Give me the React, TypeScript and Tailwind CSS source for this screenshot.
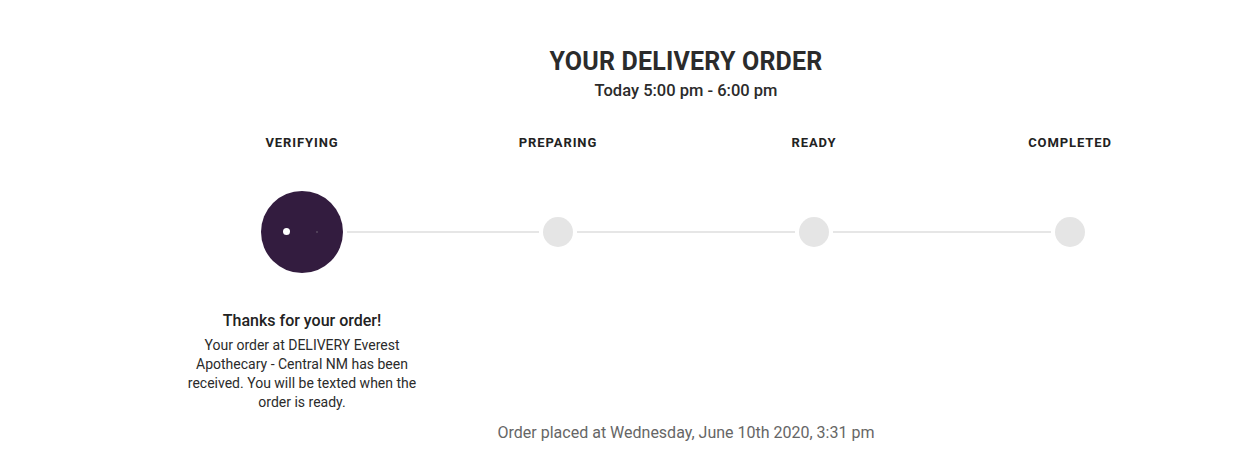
import React from "react";

const steps = ["VERIFYING", "PREPARING", "READY", "COMPLETED"];

export default function App() {
  return (
    <div
      className="w-[1239px] h-[461px] bg-white text-[#2b2b2b] overflow-hidden"
      style={{ fontFamily: "Roboto, 'Liberation Sans', sans-serif" }}
    >
      <div className="ml-[174px] w-[1024px] flex flex-col items-center">
        <h1 className="mt-[48px] text-[25px] leading-[28px] font-bold tracking-[0.2px] text-[#2b2b2b]">
          YOUR DELIVERY ORDER
        </h1>
        <div className="mt-[5px] text-[16.5px] leading-[20px] font-medium text-[#2b2b2b]">
          Today 5:00 pm - 6:00 pm
        </div>

        <div className="mt-[34px] w-full grid grid-cols-4">
          {steps.map((s, i) => (
            <div key={s} className="flex flex-col items-center">
              <div className="text-[13px] leading-[16px] font-bold tracking-[0.9px] text-[#222]">
                {s}
              </div>
              <div className="mt-[40px] w-full h-[82px] flex items-center">
                <div className="flex-1 pr-1">
                  {i > 0 && <div className="h-[2px] bg-[#e6e6e6]" />}
                </div>
                {i === 0 ? (
                  <div className="relative w-[82px] h-[82px] rounded-full bg-[#331c3f]">
                    <span className="absolute left-[22px] top-[37px] w-[7px] h-[7px] rounded-full bg-white" />
                    <span className="absolute left-[55px] top-[40px] w-[2px] h-[2px] rounded-full bg-[#5a4a62]" />
                  </div>
                ) : (
                  <div className="w-[30px] h-[30px] rounded-full bg-[#e5e5e5]" />
                )}
                <div className="flex-1 pl-1">
                  {i < 3 && <div className="h-[2px] bg-[#e6e6e6]" />}
                </div>
              </div>
              {i === 0 && (
                <div className="mt-[38px] w-[244px] text-center">
                  <div className="text-[16px] leading-[20px] font-medium text-[#222]">
                    Thanks for your order!
                  </div>
                  <p className="mt-[5px] text-[14px] leading-[19px] text-[#2b2b2b]">
                    Your order at DELIVERY Everest Apothecary - Central NM has been received. You
                    will be texted when the order is ready.
                  </p>
                </div>
              )}
            </div>
          ))}
        </div>

        <div className="mt-[11px] text-[16px] leading-[20px] text-[#666]">
          Order placed at Wednesday, June 10th 2020, 3:31 pm
        </div>
      </div>
    </div>
  );
}
